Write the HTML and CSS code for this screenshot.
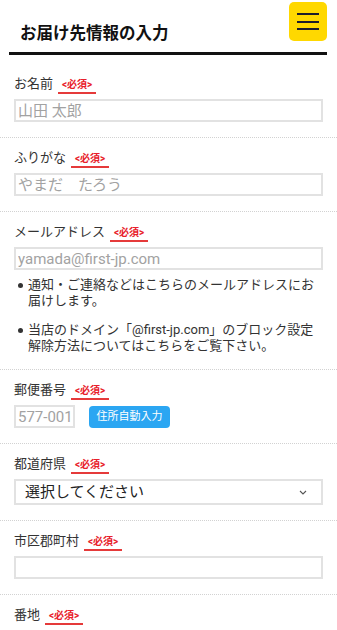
FILE: index.html
```html
<!DOCTYPE html>
<html lang="ja">
<head>
<meta charset="utf-8">
<title>お届け先情報の入力</title>
<link rel="stylesheet" href="styles.css">
</head>
<body>
<header class="header">
  <h1 class="title">お届け先情報の入力</h1>
  <button class="menu" type="button" aria-label="メニュー">
    <span class="bar"></span><span class="bar"></span><span class="bar"></span>
  </button>
</header>

<form class="form">
  <div class="field field-first">
    <div class="label-row"><span class="label">お名前</span><span class="req">&lt;必須&gt;</span></div>
    <input class="text" type="text" placeholder="山田 太郎">
  </div>

  <div class="field">
    <div class="label-row"><span class="label">ふりがな</span><span class="req">&lt;必須&gt;</span></div>
    <input class="text" type="text" placeholder="やまだ　たろう">
  </div>

  <div class="field">
    <div class="label-row"><span class="label">メールアドレス</span><span class="req">&lt;必須&gt;</span></div>
    <input class="text" type="email" placeholder="yamada@first-jp.com">
    <ul class="notes">
      <li>通知・ご連絡などはこちらのメールアドレスにお届けします。</li>
      <li>当店のドメイン「@first-jp.com」のブロック設定解除方法についてはこちらをご覧下さい。</li>
    </ul>
  </div>

  <div class="field">
    <div class="label-row"><span class="label">郵便番号</span><span class="req">&lt;必須&gt;</span></div>
    <div class="zip-row">
      <input class="text zip" type="text" placeholder="577-0012">
      <button class="auto" type="button">住所自動入力</button>
    </div>
  </div>

  <div class="field">
    <div class="label-row"><span class="label">都道府県</span><span class="req">&lt;必須&gt;</span></div>
    <div class="select-wrap">
      <select class="select">
        <option>選択してください</option>
      </select>
      <svg class="chev" width="8" height="5" viewBox="0 0 8 5"><path d="M1 1 L4 4 L7 1" fill="none" stroke="#555" stroke-width="1.1"/></svg>
    </div>
  </div>

  <div class="field">
    <div class="label-row"><span class="label">市区郡町村</span><span class="req">&lt;必須&gt;</span></div>
    <input class="text" type="text">
  </div>

  <div class="field">
    <div class="label-row"><span class="label">番地</span><span class="req">&lt;必須&gt;</span></div>
    <input class="text" type="text">
  </div>
</form>
</body>
</html>
```

FILE: styles.css
```css
* { box-sizing: border-box; }

html, body {
  margin: 0;
  padding: 0;
  background: #ffffff;
  font-family: "Roboto", "Noto Sans CJK JP", sans-serif;
  color: #333333;
}

body { width: 337px; overflow: hidden; }

.header {
  display: flex;
  justify-content: space-between;
  align-items: flex-start;
  height: 55px;
  margin: 0 10px 0 9px;
  border-bottom: 3px solid #111111;
}

.title {
  align-self: flex-end;
  margin: 0 0 8px 11px;
  font-size: 16.5px;
  line-height: 20px;
  font-weight: 700;
  color: #111111;
}

.menu {
  margin-top: 2px;
  width: 38px;
  height: 39px;
  padding: 0;
  border: none;
  border-radius: 5px;
  background: #ffd800;
  display: flex;
  flex-direction: column;
  align-items: center;
  justify-content: center;
  gap: 5.5px;
}

.bar {
  display: block;
  width: 22px;
  height: 2px;
  background: #1c1c2c;
}

.form { margin-top: 9px; }

.field {
  padding: 11px 14px 15px;
  border-top: 1px dotted #d2d2d2;
}

.field-first { border-top: none; }

.label-row {
  display: flex;
  align-items: flex-start;
  height: 19px;
  margin-bottom: 5px;
}

.label {
  font-size: 13px;
  line-height: 18px;
  color: #333333;
}

.req {
  margin: 3px 0 0 5px;
  padding: 0 4px;
  font-size: 10px;
  line-height: 14px;
  font-weight: 700;
  color: #e8202a;
  border-bottom: 2px solid #e53a3a;
}

.text {
  display: block;
  width: 100%;
  height: 23px;
  margin: 0;
  padding: 0 2px;
  border: 2px solid #e2e2e2;
  border-radius: 0;
  background: #ffffff;
  font-family: "Roboto", "Noto Sans CJK JP", sans-serif;
  font-size: 15px;
  color: #333333;
  outline: none;
}

.text::placeholder { color: #a2a2a2; }

.notes {
  list-style: none;
  margin: 7px 0 0;
  padding: 0;
}

.notes li {
  position: relative;
  padding-left: 14px;
  font-size: 13px;
  line-height: 16px;
  color: #333333;
}

.notes li + li { margin-top: 13px; }

.notes li::before {
  content: "";
  position: absolute;
  left: 4px;
  top: 6px;
  width: 5px;
  height: 5px;
  border-radius: 50%;
  background: #333333;
}

.zip-row {
  display: flex;
  align-items: center;
  gap: 14px;
}

.text.zip { width: 61px; }

.auto {
  width: 81px;
  height: 22px;
  padding: 0;
  border: none;
  border-radius: 4px;
  background: #2ba6f2;
  color: #ffffff;
  font-family: "Roboto", "Noto Sans CJK JP", sans-serif;
  font-size: 11px;
  line-height: 22px;
}

.select-wrap { position: relative; }

.select {
  display: block;
  width: 100%;
  height: 26px;
  margin: 0;
  padding: 0 0 0 9px;
  border: 2px solid #e2e2e2;
  border-radius: 0;
  background: #ffffff;
  -webkit-appearance: none;
  appearance: none;
  font-family: "Roboto", "Noto Sans CJK JP", sans-serif;
  font-size: 15px;
  color: #222222;
  outline: none;
}

.chev {
  position: absolute;
  left: 285px;
  top: 11px;
  pointer-events: none;
}
```
